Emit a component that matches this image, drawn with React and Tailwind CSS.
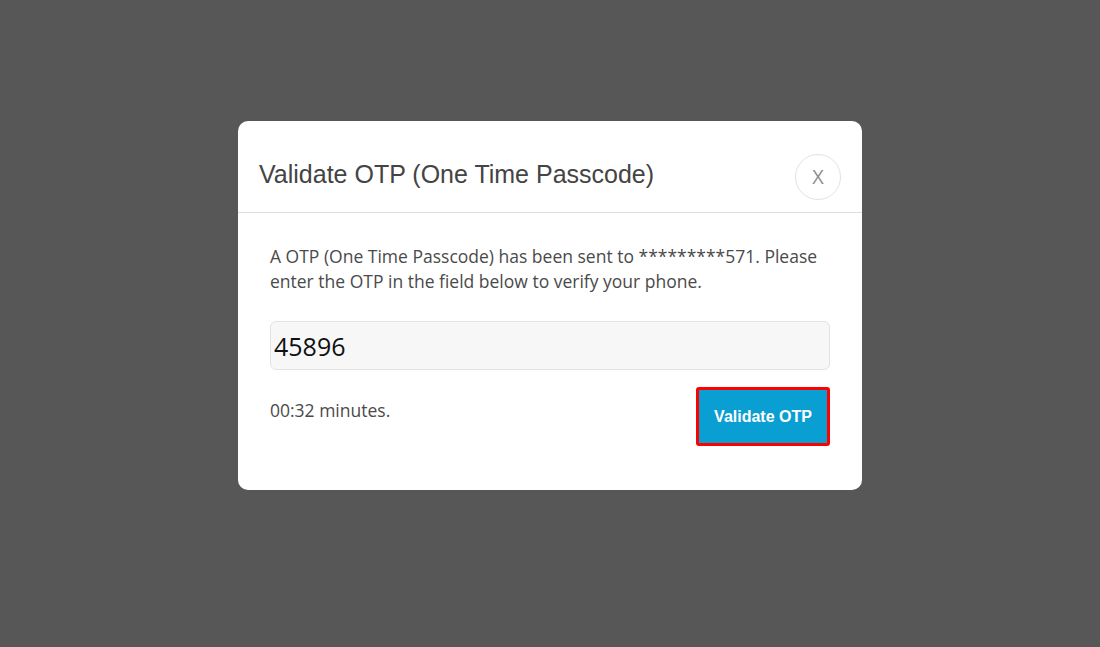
import React, { useState } from "react";

const OtpModal = () => {
  const [otp, setOtp] = useState("45896");

  return (
    <div className="w-[624px] rounded-[10px] bg-white">
      <div className="flex items-center justify-between border-b border-[#dedede] pl-[21px] pr-[21px] pt-[33px] pb-[12px]">
        <h1 className="mb-[6px] font-['Liberation_Sans',Arial,sans-serif] text-[25px] leading-[32px] text-[#444]">
          Validate OTP (One Time Passcode)
        </h1>
        <button className="flex h-[46px] w-[46px] items-center justify-center rounded-full border border-[#e2e2e2] font-['Open_Sans',sans-serif] text-[20px] text-[#8f8f8f]">
          X
        </button>
      </div>

      <div className="px-[32px] pt-[31px] pb-[44px] font-['Open_Sans',sans-serif]">
        <p className="text-[17.5px] leading-[25px] text-[#4a4a4a]">
          A OTP (One Time Passcode) has been sent to *********571. Please
          enter the OTP in the field below to verify your phone.
        </p>

        <input
          type="text"
          value={otp}
          onChange={(e) => setOtp(e.target.value)}
          className="mt-[27px] block h-[49px] w-full rounded-[6px] border border-[#e3e3e3] bg-[#f7f7f7] px-[3px] font-['Open_Sans',sans-serif] text-[25px] text-[#111] outline-none"
        />

        <div className="mt-[17px] flex items-start justify-between">
          <span className="mt-[11px] text-[17.5px] leading-[25px] text-[#4a4a4a]">
            00:32 minutes.
          </span>
          <button className="h-[59px] w-[134px] rounded-[3px] border-[3px] border-[#f00] bg-[#0a9fd3] font-['Liberation_Sans',Arial,sans-serif] text-[16px] font-bold text-white">
            Validate OTP
          </button>
        </div>
      </div>
    </div>
  );
};

export default function App() {
  return (
    <div className="flex h-[647px] w-full items-start justify-center bg-[#575757] pt-[121px]">
      <OtpModal />
    </div>
  );
}
